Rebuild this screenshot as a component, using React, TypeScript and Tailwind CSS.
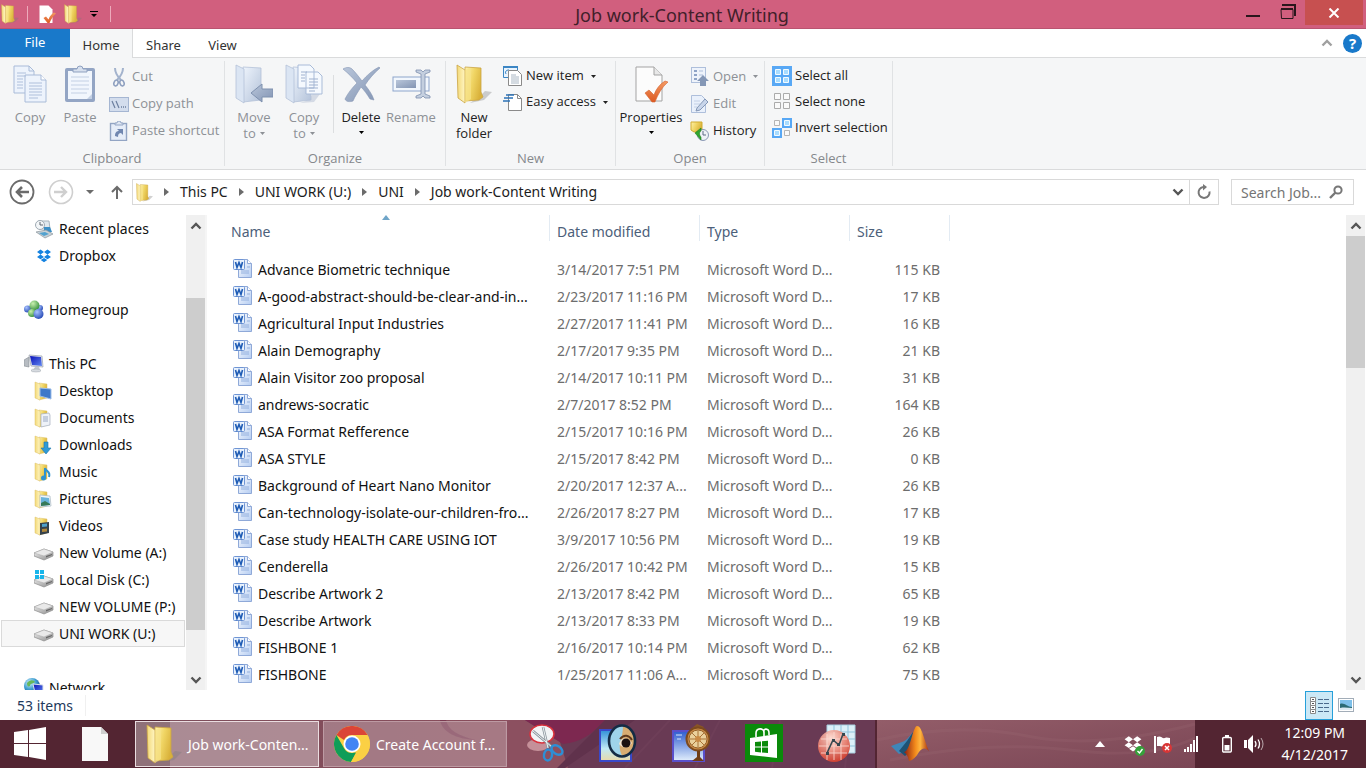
import type { ReactNode } from 'react'
import clsx from 'clsx'

interface IconProps {
  className?: string
}

// Gradients shared by every icon on the page
function SharedDefs() {
  return (
    <svg className="absolute h-0 w-0" aria-hidden="true">
      <defs>
        <linearGradient id="gold" x1="0" y1="0" x2="1" y2="0.4">
          <stop offset="0" stopColor="#fff3ae" />
          <stop offset="0.5" stopColor="#f0d564" />
          <stop offset="1" stopColor="#d9b13a" />
        </linearGradient>
        <linearGradient id="goldLight" x1="0" y1="0" x2="1" y2="0">
          <stop offset="0" stopColor="#f3d978" />
          <stop offset="1" stopColor="#fff6c4" />
        </linearGradient>
        <linearGradient id="steel" x1="0" y1="0" x2="1" y2="1">
          <stop offset="0" stopColor="#eef4fc" />
          <stop offset="1" stopColor="#b4c3da" />
        </linearGradient>
        <linearGradient id="steelDark" x1="0" y1="0" x2="1" y2="1">
          <stop offset="0" stopColor="#b9c6da" />
          <stop offset="1" stopColor="#8294b3" />
        </linearGradient>
        <linearGradient id="tick" x1="0" y1="0" x2="0" y2="1">
          <stop offset="0" stopColor="#f39a63" />
          <stop offset="1" stopColor="#dd5a22" />
        </linearGradient>
        <linearGradient id="wordPage" x1="0" y1="0" x2="1" y2="1">
          <stop offset="0" stopColor="#ffffff" />
          <stop offset="1" stopColor="#b5cdf2" />
        </linearGradient>
        <linearGradient id="screen" x1="0" y1="0" x2="1" y2="1">
          <stop offset="0" stopColor="#0b11b8" />
          <stop offset="1" stopColor="#5f86f0" />
        </linearGradient>
        <linearGradient id="drive" x1="0" y1="0" x2="1" y2="1">
          <stop offset="0" stopColor="#f2f2f2" />
          <stop offset="1" stopColor="#8d8d8d" />
        </linearGradient>
        <radialGradient id="globe" cx="0.35" cy="0.3" r="0.8">
          <stop offset="0" stopColor="#d3f1ff" />
          <stop offset="0.5" stopColor="#3f9fd0" />
          <stop offset="1" stopColor="#12407f" />
        </radialGradient>
        <radialGradient id="greenBall" cx="0.35" cy="0.3" r="0.8">
          <stop offset="0" stopColor="#c9f0b0" />
          <stop offset="1" stopColor="#2c8a34" />
        </radialGradient>
        <radialGradient id="blueBall" cx="0.35" cy="0.3" r="0.8">
          <stop offset="0" stopColor="#a9c4ff" />
          <stop offset="1" stopColor="#1b3fb0" />
        </radialGradient>
        <radialGradient id="redBall" cx="0.4" cy="0.25" r="0.8">
          <stop offset="0" stopColor="#ffd8cc" />
          <stop offset="1" stopColor="#d93a26" />
        </radialGradient>
        <linearGradient id="beach" x1="0" y1="0" x2="0" y2="1">
          <stop offset="0" stopColor="#2f8fd8" />
          <stop offset="0.6" stopColor="#bfe9f5" />
          <stop offset="1" stopColor="#e9d9a8" />
        </linearGradient>
        <linearGradient id="sky" x1="0" y1="0" x2="0" y2="1">
          <stop offset="0" stopColor="#2c5cd0" />
          <stop offset="1" stopColor="#e3effc" />
        </linearGradient>
        <linearGradient id="membrane" x1="0" y1="0" x2="1" y2="0">
          <stop offset="0" stopColor="#8c1d10" />
          <stop offset="0.45" stopColor="#f28a1c" />
          <stop offset="0.65" stopColor="#ffb63f" />
          <stop offset="1" stopColor="#a62b0d" />
        </linearGradient>
        <linearGradient id="clothLeft" x1="0" y1="0" x2="1" y2="0">
          <stop offset="0" stopColor="#7d4e5b" />
          <stop offset="1" stopColor="#8b4c5b" />
        </linearGradient>
        <linearGradient id="clothRight" x1="0" y1="0" x2="1" y2="1">
          <stop offset="0" stopColor="#935d69" />
          <stop offset="1" stopColor="#7b4655" />
        </linearGradient>
      </defs>
    </svg>
  )
}

function FolderIcon({ className }: IconProps) {
  return (
    <svg viewBox="0 0 36 40" className={className} aria-hidden="true">
      <path d="M24 32l5-5 7 1-8 8-14 3z" fill="#7a7a7a" opacity="0.35" />
      <path d="M9 3l16 1v24l2 5-4 3-14 1z" fill="url(#gold)" stroke="#caa545" strokeWidth="0.8" />
      <path d="M1 1l8 5v33l-7-5z" fill="url(#goldLight)" stroke="#caa545" strokeWidth="0.8" />
      <path d="M9 6l6-2v31l-6 4z" fill="#f7e28a" opacity="0.7" />
    </svg>
  )
}

function PageTickIcon({ className }: IconProps) {
  return (
    <svg viewBox="0 0 36 38" className={className} aria-hidden="true">
      <path d="M3 2h18l8 8v26H3z" fill="#fcfcfc" stroke="#a3a3a3" />
      <path d="M21 2v8h8" fill="#e8e8e8" stroke="#a3a3a3" />
      <path d="M12 28l4-3 5 5c2-6 6-11 11-14l3 1c-6 5-10 12-13 20h-3z" fill="url(#tick)" stroke="#d4622f" strokeWidth="0.6" />
    </svg>
  )
}

function CopyIcon() {
  return (
    <svg viewBox="0 0 36 38" className="h-[38px] w-9" aria-hidden="true">
      <g fill="#edf3fc" stroke="#a9bbd8">
        <path d="M2 1h15l5 5v22H2z" />
        <path d="M17 1v5h5" fill="none" />
        <path d="M13 10h16l5 5v22H13z" />
        <path d="M29 10v5h5" fill="#fff" />
      </g>
      <path d="M5 8h9M5 11h9M5 14h6M5 17h6M5 20h6M5 23h6M17 18h13M17 21h13M17 24h13M17 27h13M17 30h13M17 33h9" stroke="#aebfdb" />
    </svg>
  )
}

function PasteIcon() {
  return (
    <svg viewBox="0 0 36 38" className="h-[38px] w-9" aria-hidden="true">
      <rect x="3" y="3" width="30" height="34" rx="2" fill="#93a5c4" />
      <path d="M6 6h24v28H6z" fill="#f1f6fd" />
      <path d="M30 29l-5 5h5z" fill="#c3d0e4" />
      <path d="M9 12h18M9 16h18M9 20h18M9 24h18M9 28h16" stroke="#c3d0e4" />
      <path d="M11 7V4h4a3 3 0 016 0h4v3z" fill="#d7e0ee" stroke="#8fa1c0" />
    </svg>
  )
}

function CutIcon() {
  return (
    <svg viewBox="0 0 20 20" className="size-5" aria-hidden="true">
      <path d="M6 1c0 4 2 8 6 12M14 1c0 4-2 8-6 12" fill="none" stroke="#a3b3cd" strokeWidth="2" />
      <ellipse cx="7" cy="16" rx="2" ry="3" transform="rotate(20 7 16)" fill="none" stroke="#8d9fbf" strokeWidth="1.6" />
      <ellipse cx="13" cy="16" rx="2" ry="3" transform="rotate(-20 13 16)" fill="none" stroke="#8d9fbf" strokeWidth="1.6" />
    </svg>
  )
}

function CopyPathIcon() {
  return (
    <svg viewBox="0 0 20 20" className="size-5" aria-hidden="true">
      <rect x="0.5" y="3.5" width="19" height="14" fill="#d3dded" stroke="#a5b6d2" />
      <path d="M3 7l3 7M7 7l3 7" stroke="#6c7f9f" strokeWidth="1.2" />
      <path d="M12 13h1M14 13h1M16 13h1" stroke="#6c7f9f" strokeWidth="1.4" />
    </svg>
  )
}

function PasteShortcutIcon() {
  return (
    <svg viewBox="0 0 20 20" className="size-5" aria-hidden="true">
      <rect x="1.5" y="2.5" width="16" height="17" fill="#e6edf8" stroke="#93a5c4" strokeWidth="1.4" />
      <path d="M6 4V2h2a2 2 0 014 0h2v2z" fill="#dfe7f3" stroke="#93a5c4" />
      <path d="M6 15c0-4 2-5 4-5L8 8h6v6l-2-2c-2 0-3 1-3 4z" fill="#7187b0" />
    </svg>
  )
}

function MoveToIcon() {
  return (
    <svg viewBox="0 0 38 40" className="h-10 w-[38px]" aria-hidden="true">
      <path d="M8 3l18 1v32L8 38z" fill="url(#steel)" stroke="#b4c2d8" strokeWidth="0.8" />
      <path d="M1 1l8 4v34l-8-5z" fill="#dbe5f3" stroke="#b4c2d8" strokeWidth="0.8" />
      <path d="M16 29l11-9v5h11v8H27v5z" fill="url(#steelDark)" stroke="#7f91ae" />
    </svg>
  )
}

function CopyToIcon() {
  return (
    <svg viewBox="0 0 38 40" className="h-10 w-[38px]" aria-hidden="true">
      <path d="M24 36l4-7 7 1-6 8-14 1z" fill="#c6cfdd" opacity="0.7" />
      <path d="M8 3l18 1v32L8 38z" fill="url(#steel)" stroke="#b4c2d8" strokeWidth="0.8" />
      <path d="M13 1h12l4 4v19H13zM21 8h12l4 4v18H21z" fill="#f5f9fe" stroke="#a9bbd8" />
      <path d="M16 8h6M16 11h4M16 14h4M16 17h4M24 15h9M24 18h9M24 21h9M24 24h9M24 27h6" stroke="#9fb1cf" />
      <path d="M1 1l8 4v34l-8-5z" fill="#dbe5f3" stroke="#b4c2d8" strokeWidth="0.8" />
    </svg>
  )
}

function DeleteIcon() {
  return (
    <svg viewBox="0 0 38 38" className="size-[38px]" aria-hidden="true">
      <path d="M1 4c3-2 7-2 9 0 4 4 7 8 10 12C25 10 31 5 37 2l1 1c-6 5-11 11-15 17 4 5 7 9 9 15l-4-1c-3-5-6-9-9-12-3 5-6 9-8 14-3 1-7 1-8-2 3-6 7-11 12-16C11 13 6 8 1 4z" fill="url(#steelDark)" stroke="#8496b3" strokeWidth="0.6" />
    </svg>
  )
}

function RenameIcon() {
  return (
    <svg viewBox="0 0 40 38" className="h-[38px] w-10" aria-hidden="true">
      <rect x="2" y="12" width="36" height="14" fill="#f2f7fd" stroke="#8ea5cc" />
      <rect x="5" y="15" width="20" height="8" fill="url(#steelDark)" />
      <path d="M25 5h5l2 2 2-2h5v2l-5 2v20l5 2v2h-5l-2-2-2 2h-5v-2l5-2V9l-5-2z" fill="#c4cfdf" stroke="#7f91ae" strokeWidth="0.8" />
    </svg>
  )
}

function NewItemIcon() {
  return (
    <svg viewBox="0 0 20 20" className="size-5" aria-hidden="true">
      <path d="M0.5 0.5h14v11h-14z" fill="#eaf4fd" stroke="#3c86c4" />
      <path d="M0 1h15" stroke="#3c86c4" strokeWidth="2" />
      <path d="M3 8a2.5 2.5 0 014-3" fill="none" stroke="#3c86c4" />
      <path d="M5.5 4.5h9l4 4v11h-13z" fill="#fff" stroke="#8a8a8a" />
      <path d="M8 9h5M8 11h8M8 13h8M8 15h8M8 17h8" stroke="#aab7c4" />
    </svg>
  )
}

function EasyAccessIcon() {
  return (
    <svg viewBox="0 0 20 20" className="size-5" aria-hidden="true">
      <path d="M5.5 2.5h9l4 4v12h-13z" fill="#fff" stroke="#8a8a8a" />
      <path d="M14.5 2.5v4h4" fill="none" stroke="#8a8a8a" />
      <path d="M3 3h8M1 6h9M0 9h7" stroke="#2c73b8" strokeWidth="1.4" />
    </svg>
  )
}

function OpenIcon() {
  return (
    <svg viewBox="0 0 20 20" className="size-5" aria-hidden="true">
      <rect x="1.5" y="0.5" width="14" height="15" fill="#eef3fb" stroke="#aebfdb" />
      <path d="M4 3h3v2H4zM4 7h3v2H4zM4 11h3v2H4z" fill="#8ea3c7" />
      <path d="M9 4h4M9 8h4" stroke="#aebfdb" />
      <path d="M13 8l6 6h-3v5h-6v-5H7z" fill="#8497b6" />
    </svg>
  )
}

function EditIcon() {
  return (
    <svg viewBox="0 0 20 20" className="size-5" aria-hidden="true">
      <path d="M1.500 1.500h10l4 4v13h-14z" fill="#e9f0fb" stroke="#aebfdb" />
      <path d="M4 7h6M4 10h6M4 13h3" stroke="#c3d0e6" />
      <path d="M7 14l8-9 3 3-8 8-4 1z" fill="#c8d5ea" stroke="#8497b6" />
    </svg>
  )
}

function HistoryIcon() {
  return (
    <svg viewBox="0 0 20 20" className="size-5" aria-hidden="true">
      <path d="M1 1h11v10H4l-3-2z" fill="url(#gold)" stroke="#d1ac2f" />
      <circle cx="13" cy="14" r="5.5" fill="#eef1f6" stroke="#8998b3" />
      <path d="M13 10v4h3" fill="none" stroke="#5c6b86" />
      <path d="M5 12l6-5v3c-2 1-2 4 0 6v3z" fill="#31a62f" stroke="#1d7d1f" strokeWidth="0.6" />
    </svg>
  )
}

function SelectAllIcon() {
  return (
    <svg viewBox="0 0 20 20" className="size-5" aria-hidden="true">
      <path d="M0 0h20v20H0z" fill="#58a8f5" />
      <path d="M3.500 3.500h5v5h-5zM11.500 3.500h5v5h-5zM3.500 11.500h5v5h-5zM11.500 11.500h5v5h-5z" fill="#a8dcff" stroke="#f2fbff" />
    </svg>
  )
}

function SelectNoneIcon() {
  return (
    <svg viewBox="0 0 20 20" className="size-5" aria-hidden="true">
      <path d="M2.500 1.500h6v6h-6zM11.500 1.500h6v6h-6zM2.500 10.500h6v6h-6zM11.500 10.500h6v6h-6z" fill="#fafafa" stroke="#ababab" />
    </svg>
  )
}

function InvertIcon() {
  return (
    <svg viewBox="0 0 20 20" className="size-5" aria-hidden="true">
      <path d="M10 0h10v10H10zM0 10h10v10H0z" fill="#58a8f5" />
      <path d="M12.500 2.500h5v5h-5zM2.500 12.500h5v5h-5z" fill="#a8dcff" stroke="#f2fbff" />
      <path d="M2.500 2.500h5v5h-5zM12.500 12.500h5v5h-5z" fill="#fafafa" stroke="#b5b5b5" />
    </svg>
  )
}

function WordIcon() {
  return (
    <svg viewBox="0 0 20 20" className="mb-[3px] size-5 shrink-0" aria-hidden="true">
      <path d="M5.500 1.500h9l4 4v14h-13z" fill="url(#wordPage)" stroke="#8fa9d8" />
      <path d="M14.500 1.500v4h4" fill="#fff" stroke="#8fa9d8" />
      <path d="M14 9h3M8 13h8M8 15h8" stroke="#93b0de" />
      <rect x="0.5" y="1.5" width="11" height="10" rx="1" fill="#e9f2fd" stroke="#6f95d4" />
      <path d="M2.500 4l1.500 5.500 2-5 2 5L9.500 4" fill="none" stroke="#1f5cb5" strokeWidth="1.6" />
    </svg>
  )
}

function DropboxIcon({ className }: IconProps) {
  return (
    <svg viewBox="0 0 20 20" className={className} fill="currentColor" aria-hidden="true">
      <path d="M6.500 3.500L10 6 6.500 8.500 3 6zM13.500 3.500L17 6l-3.500 2.500L10 6zM6.500 8.500L10 11l-3.500 2.300L3 11zM13.500 8.500L17 11l-3.500 2.300L10 11zM6.700 14L10 11.900l3.300 2.100L10 16.200z" />
    </svg>
  )
}

function RecentIcon() {
  return (
    <svg viewBox="0 0 20 20" className="size-5" aria-hidden="true">
      <path d="M4 2h11l1 8H5z" fill="#dfe8ee" stroke="#a7b4bd" />
      <circle cx="6" cy="6" r="4.5" fill="#f3f6f8" stroke="#9faab3" />
      <path d="M6 3v3h3" fill="none" stroke="#5c6770" />
      <path d="M10 8h6l2 5-8 1z" fill="#3b8fc6" />
      <path d="M2 13l10-2 7 4-8 4z" fill="#c9d1d6" stroke="#8b969d" strokeWidth="0.7" />
      <path d="M5 14l6-1 4 2-5 2z" fill="#53a2cf" />
    </svg>
  )
}

function HomegroupIcon() {
  return (
    <svg viewBox="0 0 20 20" className="size-5" aria-hidden="true">
      <circle cx="3.5" cy="9" r="3.5" fill="url(#blueBall)" />
      <circle cx="16" cy="8" r="3" fill="url(#blueBall)" />
      <circle cx="10.5" cy="5.5" r="5" fill="url(#greenBall)" />
      <circle cx="8" cy="13" r="4" fill="url(#greenBall)" />
      <circle cx="14.5" cy="14" r="5" fill="url(#blueBall)" />
    </svg>
  )
}

function ComputerIcon() {
  return (
    <svg viewBox="0 0 20 20" className="size-5" aria-hidden="true">
      <path d="M0 6l5-3v10l-5-1z" fill="#b7bcc2" stroke="#878d94" strokeWidth="0.6" />
      <path d="M5 1l13 1 1 11-12-1z" fill="#e6e9ee" stroke="#9aa1aa" strokeWidth="0.7" />
      <path d="M6 2l11 1 1 9-10-1z" fill="url(#screen)" />
      <path d="M11 13h4l1 3H9z" fill="#c3c8cf" />
      <ellipse cx="12" cy="16.5" rx="5" ry="1.5" fill="#d7dbe0" stroke="#a0a6ae" strokeWidth="0.5" />
    </svg>
  )
}

function NetworkIcon() {
  return (
    <svg viewBox="0 0 20 20" className="size-5" aria-hidden="true">
      <circle cx="8" cy="8" r="8" fill="url(#globe)" />
      <path d="M3 5c3-4 7-3 8-1-2 2-5 1-5 4-2 1-3 0-3-3z" fill="#69b85a" />
      <path d="M9 6l10 1v9l-8-1z" fill="url(#screen)" stroke="#dfe4ea" />
      <path d="M12 17h5l1 2h-7z" fill="#c3c8cf" />
    </svg>
  )
}

function DriveIcon({ windows = false }: { windows?: boolean }) {
  return (
    <svg viewBox="0 0 20 20" className="size-5" aria-hidden="true">
      <path d="M0 10l10-4 9 3v4l-9 4-10-4z" fill="url(#drive)" stroke="#8c8c8c" strokeWidth="0.7" />
      <path d="M0 10l10-4 9 3-9 4z" fill="#e9e9e9" stroke="#a8a8a8" strokeWidth="0.5" />
      <path d="M12 13l6-2v1l-6 2.500z" fill="#666" />
      {windows && <path d="M1 0h4v4H1zM6 0h4v4H6zM1 5h4v4H1zM6 5h4v4H6z" fill="#19b5ea" />}
    </svg>
  )
}

// Small folder with a badge for the library it stands for
function LibraryIcon({ children }: { children: ReactNode }) {
  return (
    <svg viewBox="0 0 20 20" className="size-5" aria-hidden="true">
      <path d="M5 2l8 1v14l-8 2z" fill="url(#gold)" stroke="#dcc06a" strokeWidth="0.5" />
      <path d="M1 1l5 2v16l-5-2z" fill="url(#goldLight)" stroke="#dcc06a" strokeWidth="0.5" />
      {children}
    </svg>
  )
}

function Caret({ className }: IconProps) {
  return (
    <svg viewBox="0 0 5 3" className={clsx('h-[3px] w-[5px]', className)} fill="currentColor" aria-hidden="true">
      <path d="M0 0h5L2.500 3z" />
    </svg>
  )
}

function Chevron({ className }: IconProps) {
  return (
    <svg viewBox="0 0 12 8" className={clsx('h-2 w-3', className)} fill="none" stroke="currentColor" strokeWidth="2.4" aria-hidden="true">
      <path d="M1.500 6.500L6 2l4.500 4.500" />
    </svg>
  )
}

interface BigButtonProps {
  icon: ReactNode
  lines: string[]
  caret?: boolean
  disabled?: boolean
  wide?: boolean
}

function BigButton({ icon, lines, caret, disabled, wide }: BigButtonProps) {
  const last = lines.length - 1
  return (
    <button
      type="button"
      disabled={disabled}
      className={clsx('flex shrink-0 flex-col items-center', wide ? 'w-[70px]' : 'w-[50px]', disabled ? 'text-[#8d9196]' : 'text-[#222]')}
    >
      <span className="flex h-[46px] items-center pb-1">{icon}</span>
      {lines.map((line, i) => (
        <span key={line} className="flex items-center gap-1 leading-4 whitespace-nowrap">
          {line}
          {caret && i === last && last > 0 && <Caret />}
        </span>
      ))}
      {caret && last === 0 && <Caret className="mt-[6px] text-black" />}
    </button>
  )
}

interface SmallButtonProps {
  icon: ReactNode
  label: string
  caret?: boolean
  disabled?: boolean
  tall?: boolean
}

function SmallButton({ icon, label, caret, disabled, tall }: SmallButtonProps) {
  return (
    <button
      type="button"
      disabled={disabled}
      className={clsx('flex items-center gap-[3px] whitespace-nowrap', tall ? 'h-[27px]' : 'h-[26px]', disabled ? 'text-[#8d9196]' : 'text-[#222]')}
    >
      {icon}
      {label}
      {caret && <Caret className="ml-1" />}
    </button>
  )
}

function RibbonGroup({ title, className, children }: { title: string; className: string; children: ReactNode }) {
  return (
    <section aria-label={title} className={clsx('my-[3px] flex flex-col border-r border-[#e0e2e4]', className)}>
      <div className="flex flex-1 pt-[2px]">{children}</div>
      <h2 className="text-center leading-4 text-[#85888c]">{title}</h2>
    </section>
  )
}

function TitleBar() {
  return (
    <header className="flex h-[29px] items-start border-b border-[#b95470] bg-[#d15f7e]">
      <div className="flex h-7 flex-1 items-center pl-px">
        <FolderIcon className="h-5 w-[18px]" />
        <span className="ml-2 h-4 border-l border-[#edaabb]" />
        <button type="button" aria-label="Properties" className="ml-[10px]">
          <svg viewBox="0 0 36 38" className="h-[19px] w-[18px]" aria-hidden="true">
            <path d="M3 1h18l8 8v27H3z" fill="#fff" />
            <path d="M11 26l5-3 5 6c2-6 6-11 11-14l4 2c-6 5-10 12-13 19h-4z" fill="url(#tick)" />
          </svg>
        </button>
        <button type="button" aria-label="New folder" className="ml-2">
          <FolderIcon className="h-5 w-[18px]" />
        </button>
        <button type="button" aria-label="Customize toolbar" className="ml-2">
          <svg viewBox="0 0 8 8" className="size-2" aria-hidden="true">
            <path d="M0 1h8v1H0zM1 4h6L4 7z" />
          </svg>
        </button>
        <span className="ml-3 h-4 border-l border-[#edaabb]" />
      </div>
      <h1 className="pt-[3px] text-[18px] leading-6 text-[#41202a]">Job work-Content Writing</h1>
      <div className="flex flex-1 justify-end pr-[3px]">
        <button type="button" aria-label="Minimize" className="flex h-6 w-9 items-center justify-center">
          <span className="mt-2 h-[2px] w-[14px] bg-[#2a161c]" />
        </button>
        <button type="button" aria-label="Restore" className="flex h-6 w-[34px] items-center justify-center">
          <svg viewBox="0 0 16 16" className="size-4" fill="none" stroke="#2a161c" aria-hidden="true">
            <path d="M2 1h13v11" strokeWidth="2" />
            <path d="M1 5.500h12v9H1.500z" />
            <path d="M1 5h12" strokeWidth="2" />
          </svg>
        </button>
        <button type="button" aria-label="Close" className="flex h-[25px] w-[58px] items-center justify-center bg-[#c75050]">
          <svg viewBox="0 0 12 10" className="h-[10px] w-3" stroke="#fff" strokeWidth="2" aria-hidden="true">
            <path d="M1.500 0.500l9 9M10.500 0.500l-9 9" />
          </svg>
        </button>
      </div>
    </header>
  )
}

function TabBar() {
  return (
    <nav className="flex h-[29px] border-b border-[#dadbdc] text-[13px] text-[#333]">
      <button type="button" className="h-7 w-[70px] bg-[#1979ca] text-white">File</button>
      <button type="button" className="-mb-px h-[29px] w-[63px] border-r border-[#dadbdc] bg-[#f5f6f7] pt-1">Home</button>
      <button type="button" className="h-[29px] w-[61px] pt-1">Share</button>
      <button type="button" className="h-[29px] w-[57px] pt-1">View</button>
      <div className="ml-auto flex items-center gap-[10px] pr-1">
        <button type="button" aria-label="Collapse ribbon" className="text-[#a0a0a0]">
          <Chevron />
        </button>
        <button type="button" aria-label="Help" className="flex size-[19px] items-center justify-center rounded-full bg-[#1979ca] text-[15px] leading-none font-bold text-white">
          ?
        </button>
      </div>
    </nav>
  )
}

function Ribbon() {
  return (
    <div className="flex h-[112px] border-b border-[#dadbdc] bg-[#f5f6f7] font-['Open_Sans','Noto_Sans',sans-serif] text-[13px]">
      <RibbonGroup title="Clipboard" className="w-[225px]">
        <div className="ml-[5px] flex">
          <BigButton icon={<CopyIcon />} lines={['Copy']} disabled />
          <BigButton icon={<PasteIcon />} lines={['Paste']} disabled />
        </div>
        <div className="ml-1">
          <SmallButton icon={<CutIcon />} label="Cut" disabled tall />
          <SmallButton icon={<CopyPathIcon />} label="Copy path" disabled tall />
          <SmallButton icon={<PasteShortcutIcon />} label="Paste shortcut" disabled tall />
        </div>
      </RibbonGroup>
      <RibbonGroup title="Organize" className="w-[221px]">
        <div className="ml-1 flex">
          <BigButton icon={<MoveToIcon />} lines={['Move', 'to']} caret disabled />
          <BigButton icon={<CopyToIcon />} lines={['Copy', 'to']} caret disabled />
        </div>
        <span className="mr-[2px] ml-1 mt-3 h-[58px] border-l border-[#dcdee0]" />
        <BigButton icon={<DeleteIcon />} lines={['Delete']} caret />
        <BigButton icon={<RenameIcon />} lines={['Rename']} disabled />
      </RibbonGroup>
      <RibbonGroup title="New" className="w-[170px]">
        <div className="ml-[3px] flex">
          <BigButton icon={<FolderIcon className="h-10 w-9" />} lines={['New', 'folder']} />
        </div>
        <div className="ml-1">
          <SmallButton icon={<NewItemIcon />} label="New item" caret />
          <SmallButton icon={<EasyAccessIcon />} label="Easy access" caret />
        </div>
      </RibbonGroup>
      <RibbonGroup title="Open" className="w-[149px]">
        <BigButton icon={<PageTickIcon className="h-[38px] w-9" />} lines={['Properties']} caret wide />
        <div className="ml-1">
          <SmallButton icon={<OpenIcon />} label="Open" caret disabled tall />
          <SmallButton icon={<EditIcon />} label="Edit" disabled tall />
          <SmallButton icon={<HistoryIcon />} label="History" tall />
        </div>
      </RibbonGroup>
      <RibbonGroup title="Select" className="w-[128px]">
        <div className="ml-[7px]">
          <SmallButton icon={<SelectAllIcon />} label="Select all" />
          <SmallButton icon={<SelectNoneIcon />} label="Select none" />
          <SmallButton icon={<InvertIcon />} label="Invert selection" />
        </div>
      </RibbonGroup>
    </div>
  )
}

const crumbs = ['This PC', 'UNI WORK (U:)', 'UNI', 'Job work-Content Writing']

function AddressBar() {
  return (
    <div className="flex h-11 items-center pr-3 pl-[9px] text-[14px] text-[#1c1c1c]">
      <button type="button" aria-label="Back" className="text-[#6b6b6b]">
        <svg viewBox="0 0 26 26" className="size-[26px]" fill="none" stroke="currentColor" aria-hidden="true">
          <circle cx="13" cy="13" r="11.5" strokeWidth="1.8" />
          <path d="M20 13H8M13 8l-5 5 5 5" strokeWidth="2.6" />
        </svg>
      </button>
      <button type="button" aria-label="Forward" disabled className="ml-[13px] text-[#cfcfcf]">
        <svg viewBox="0 0 26 26" className="size-[26px]" fill="none" stroke="currentColor" aria-hidden="true">
          <circle cx="13" cy="13" r="11.5" strokeWidth="1.6" />
          <path d="M6 13h12M13 8l5 5-5 5" strokeWidth="2.4" />
        </svg>
      </button>
      <button type="button" aria-label="Recent locations" className="ml-3 text-[#6b6b6b]">
        <svg viewBox="0 0 8 4" className="h-1 w-2" fill="currentColor" aria-hidden="true">
          <path d="M0 0h8L4 4z" />
        </svg>
      </button>
      <button type="button" aria-label="Up" className="ml-4 text-[#6b6b6b]">
        <svg viewBox="0 0 14 14" className="size-[14px]" fill="none" stroke="currentColor" strokeWidth="2" aria-hidden="true">
          <path d="M7 14V2M2 7l5-5 5 5" />
        </svg>
      </button>
      <div className="ml-2 flex h-[26px] flex-1 items-center border border-[#d9d9d9] pl-[3px]">
        <FolderIcon className="h-[19px] w-[17px]" />
        {crumbs.map((crumb) => (
          <span key={crumb} className="flex items-center">
            <svg viewBox="0 0 5 8" className="mx-[11px] h-2 w-[5px]" fill="#6b6b6b" aria-hidden="true">
              <path d="M0 0l5 4-5 4z" />
            </svg>
            <button type="button" className="pb-[2px]">{crumb}</button>
          </span>
        ))}
        <button type="button" aria-label="Previous locations" className="mr-[5px] ml-auto text-[#555]">
          <Chevron className="rotate-180" />
        </button>
        <button type="button" aria-label="Refresh" className="flex h-full w-[29px] items-center justify-center border-l border-[#d9d9d9]">
          <svg viewBox="0 0 16 16" className="size-4" fill="none" stroke="#777" strokeWidth="2" aria-hidden="true">
            <path d="M7 3a5.500 5.500 0 106.500 4.500" />
            <path d="M7 0l4 3-4 3.500z" fill="#777" stroke="none" />
          </svg>
        </button>
      </div>
      <label className="ml-3 flex h-[26px] w-[123px] items-center border border-[#d9d9d9] pl-[9px]">
        <input type="text" aria-label="Search Job work-Content Writing" placeholder="Search Job..." className="w-[88px] bg-transparent outline-none placeholder:text-[#757575]" />
        <svg viewBox="0 0 14 14" className="size-[14px] shrink-0" fill="none" stroke="#777" aria-hidden="true">
          <circle cx="9" cy="5" r="3.6" strokeWidth="2" />
          <path d="M6.500 7.500L1 13" strokeWidth="2.4" />
        </svg>
      </label>
    </div>
  )
}

interface Place {
  name: string
  icon: ReactNode
  root?: boolean
  gap?: boolean
  selected?: boolean
}

const places: Place[] = [
  { name: 'Recent places', icon: <RecentIcon /> },
  { name: 'Dropbox', icon: <DropboxIcon className="size-5 text-[#1583e0]" /> },
  { name: 'Homegroup', icon: <HomegroupIcon />, root: true, gap: true },
  { name: 'This PC', icon: <ComputerIcon />, root: true, gap: true },
  { name: 'Desktop', icon: <LibraryIcon><path d="M6 7l11 1v10L6 15z" fill="#3d78c9" stroke="#9dbde8" /></LibraryIcon> },
  {
    name: 'Documents',
    icon: (
      <LibraryIcon>
        <path d="M7 6l8-1 1 2v10l-9 2z" fill="#eef2f8" stroke="#a3aebd" strokeWidth="0.7" />
        <path d="M9 9h5M9 11h5M9 13h5" stroke="#9aa9c4" />
      </LibraryIcon>
    ),
  },
  { name: 'Downloads', icon: <LibraryIcon><path d="M10 7h4v6h3l-5 6-5-6h3z" fill="#2f9ad6" stroke="#1c76ad" strokeWidth="0.6" /></LibraryIcon> },
  {
    name: 'Music',
    icon: (
      <LibraryIcon>
        <path d="M11 6c1 4 6 3 4 9" fill="none" stroke="#2d93cf" strokeWidth="2" />
        <path d="M11 6v10" stroke="#2d93cf" strokeWidth="2" />
        <circle cx="9.5" cy="16" r="2.5" fill="#2d93cf" />
      </LibraryIcon>
    ),
  },
  {
    name: 'Pictures',
    icon: (
      <LibraryIcon>
        <path d="M6 6l10 1 1 10-11 1z" fill="#f1f6fa" stroke="#a9b7c2" strokeWidth="0.7" />
        <path d="M7 8l8 1 1 7-9 1z" fill="#69b4dc" />
        <path d="M7 14l4-2 5 3v1l-9 1z" fill="#377a58" />
      </LibraryIcon>
    ),
  },
  {
    name: 'Videos',
    icon: (
      <LibraryIcon>
        <path d="M6 7l9-1v11l-9 2z" fill="#36424c" />
        <path d="M8 8l5-.5v3L8 11z" fill="#4fa1cb" />
        <path d="M8 13l5-.5v3L8 16z" fill="#b0873b" />
      </LibraryIcon>
    ),
  },
  { name: 'New Volume (A:)', icon: <DriveIcon /> },
  { name: 'Local Disk (C:)', icon: <DriveIcon windows /> },
  { name: 'NEW VOLUME (P:)', icon: <DriveIcon /> },
  { name: 'UNI WORK (U:)', icon: <DriveIcon />, selected: true },
  { name: 'Network', icon: <NetworkIcon />, root: true, gap: true },
]

function ScrollBar({ thumb }: { thumb: ReactNode }) {
  return (
    <div className="flex w-[19px] shrink-0 flex-col bg-[#f0f0f0] text-[#555]">
      <button type="button" aria-label="Scroll up" className="flex h-[21px] shrink-0 items-center justify-center">
        <Chevron />
      </button>
      <div className="min-h-0 flex-1">{thumb}</div>
      <button type="button" aria-label="Scroll down" className="flex h-[21px] shrink-0 items-center justify-center">
        <Chevron className="rotate-180" />
      </button>
    </div>
  )
}

function Sidebar() {
  return (
    <aside className="flex shrink-0 border-r-2 border-[#f5f5f5]">
      <ul className="w-[186px] overflow-hidden pl-px">
        {places.map((place) => (
          <li key={place.name} className={clsx(place.gap && 'mt-[27px]')}>
            <button
              type="button"
              className={clsx(
                'flex h-[27px] w-[184px] items-center gap-[5px] border text-left whitespace-nowrap',
                place.root ? 'pl-[22px]' : 'pl-8',
                place.selected ? 'border-[#dadada] bg-[#f7f7f7]' : 'border-transparent',
              )}
            >
              <span className="shrink-0">{place.icon}</span>
              {place.name}
            </button>
          </li>
        ))}
      </ul>
      <ScrollBar thumb={<div className="mt-[62px] h-[332px] bg-[#cdcdcd]" />} />
    </aside>
  )
}

const files = [
  { name: 'Advance Biometric technique', date: '3/14/2017 7:51 PM', size: '115 KB' },
  { name: 'A-good-abstract-should-be-clear-and-in...', date: '2/23/2017 11:16 PM', size: '17 KB' },
  { name: 'Agricultural Input Industries', date: '2/27/2017 11:41 PM', size: '16 KB' },
  { name: 'Alain Demography', date: '2/17/2017 9:35 PM', size: '21 KB' },
  { name: 'Alain Visitor zoo proposal', date: '2/14/2017 10:11 PM', size: '31 KB' },
  { name: 'andrews-socratic', date: '2/7/2017 8:52 PM', size: '164 KB' },
  { name: 'ASA Format Refference', date: '2/15/2017 10:16 PM', size: '26 KB' },
  { name: 'ASA STYLE', date: '2/15/2017 8:42 PM', size: '0 KB' },
  { name: 'Background of Heart Nano Monitor', date: '2/20/2017 12:37 A...', size: '26 KB' },
  { name: 'Can-technology-isolate-our-children-fro...', date: '2/26/2017 8:27 PM', size: '17 KB' },
  { name: 'Case study HEALTH CARE USING IOT', date: '3/9/2017 10:56 PM', size: '19 KB' },
  { name: 'Cenderella', date: '2/26/2017 10:42 PM', size: '15 KB' },
  { name: 'Describe Artwork 2', date: '2/13/2017 8:42 PM', size: '65 KB' },
  { name: 'Describe Artwork', date: '2/13/2017 8:33 PM', size: '19 KB' },
  { name: 'FISHBONE 1', date: '2/16/2017 10:14 PM', size: '62 KB' },
  { name: 'FISHBONE', date: '1/25/2017 11:06 A...', size: '75 KB' },
]

function FileList() {
  return (
    <main className="min-w-0 flex-1 overflow-hidden">
      <table className="table-fixed border-collapse">
        <colgroup>
          <col className="w-[343px]" />
          <col className="w-[150px]" />
          <col className="w-[150px]" />
          <col className="w-[100px]" />
        </colgroup>
        <thead>
          <tr className="text-left text-[#4c607a]">
            <th className="h-[41px] p-0 align-top font-normal">
              <div className="relative flex h-[26px] items-end border-r border-[#e3ebf3] pl-6 leading-[18px]">
                Name
                <svg viewBox="0 0 8 5" className="absolute top-0 left-[175px] h-[5px] w-2" aria-hidden="true">
                  <path d="M0 5l4-5 4 5z" fill="#6fa5c8" />
                </svg>
              </div>
            </th>
            {['Date modified', 'Type', 'Size'].map((label) => (
              <th key={label} className="p-0 align-top font-normal">
                <div className="flex h-[26px] items-end border-r border-[#e3ebf3] pl-[7px] leading-[18px]">{label}</div>
              </th>
            ))}
          </tr>
        </thead>
        <tbody>
          {files.map((file) => (
            <tr key={file.name} className="h-[27px] whitespace-nowrap text-[#6d6d6d]">
              <td className="p-0 text-[#111]">
                <div className="flex items-center gap-[5px] pl-[26px]">
                  <WordIcon />
                  {file.name}
                </div>
              </td>
              <td className="p-0 pl-[7px]">{file.date}</td>
              <td className="p-0 pl-[7px]">Microsoft Word D...</td>
              <td className="p-0 pr-[10px] text-right">{file.size}</td>
            </tr>
          ))}
        </tbody>
      </table>
    </main>
  )
}

function StatusBar() {
  return (
    <footer className="flex h-[30px] items-center pr-3 pl-[17px] text-[14px] text-[#1e395b]">
      <span className="border-r border-[#f0f0f0] pr-3">53 items</span>
      <button type="button" aria-label="Details view" className="ml-auto flex h-[29px] w-7 items-center justify-center border border-[#26a0da] bg-[#cbe8f6]">
        <svg viewBox="0 0 20 17" className="h-[17px] w-5" aria-hidden="true">
          <path d="M1.500 0.500h5v4h-5zM1.500 4.500h5v4h-5zM1.500 8.500h5v4h-5zM1.500 12.500h5v4h-5z" fill="#fff" stroke="#8a8a8a" />
          <path d="M3 2.500h2M3 6.500h2M3 10.500h2M3 14.500h2" stroke="#555" />
          <path d="M9 2.500h5M15 2.500h5M9 6.500h5M15 6.500h5M9 10.500h5M15 10.500h5M9 14.500h5M15 14.500h5" stroke="#4a6a8c" />
        </svg>
      </button>
      <button type="button" aria-label="Thumbnail view" className="ml-[5px]">
        <svg viewBox="0 0 16 14" className="h-[14px] w-4" aria-hidden="true">
          <rect x="0.5" y="0.5" width="15" height="13" fill="#fff" stroke="#a2adb8" />
          <path d="M2 2h12v10H2z" fill="#7dc0ea" />
          <path d="M2 6c4-2 7 3 12 3v3H2z" fill="#2a6b75" />
          <path d="M2 10c5-1 8 0 12 0v2H2z" fill="#dceaf2" />
        </svg>
      </button>
    </footer>
  )
}

function Wallpaper() {
  return (
    <svg viewBox="0 0 1366 48" preserveAspectRatio="none" className="absolute inset-0 h-full w-full" aria-hidden="true">
      <rect width="1366" height="48" fill="#532532" />
      <rect x="170" width="390" height="48" fill="url(#clothLeft)" />
      <path d="M440 0h6c2 10 12 16 30 20-20-1-34-8-36-20z" fill="#6e2946" opacity="0.6" />
      <path d="M505 0h370v48H505z" fill="#693a54" />
      <path d="M505 0h20l35 22 8 26h-63z" fill="#8c5060" />
      <path d="M525 0h80c-12 14-24 22-42 24z" fill="#7d2850" />
      <path d="M605 0h30l-70 48h-8z" fill="#60324c" />
      <path d="M670 0l-45 48M720 0l-25 48M780 0l-8 48M850 0l-5 48" stroke="#7a4a62" strokeWidth="2" opacity="0.3" />
      <rect x="877" width="318" height="48" fill="url(#clothRight)" />
      <path d="M877 20q80-18 150-4t168-12M890 40q100-20 180-10t125-12" fill="none" stroke="#a26d76" strokeWidth="3" opacity="0.2" />
    </svg>
  )
}

function ChromeIcon() {
  return (
    <svg viewBox="0 0 36 36" className="size-9" aria-hidden="true">
      <circle cx="18" cy="18" r="18" fill="#fbd044" />
      <path d="M2.400 9A18 18 0 0133.600 9H18a9 9 0 00-8 5z" fill="#db4437" />
      <path d="M2.400 9L10.200 22.500A9 9 0 0018 27l4-.6L17 36A18 18 0 012.400 9z" fill="#0f9d58" />
      <path d="M18 10h16a18 18 0 01-17 26l8.500-14z" fill="#fbd044" />
      <circle cx="18" cy="18" r="8.5" fill="#fff" />
      <circle cx="18" cy="18" r="6.8" fill="#4285f4" />
    </svg>
  )
}

const pinned: { name: string; icon: ReactNode }[] = [
  {
    name: 'Snipping Tool',
    icon: (
      <>
        <ellipse cx="12" cy="21" rx="11" ry="6" fill="#d3a0a8" opacity="0.8" />
        <ellipse cx="16" cy="10" rx="12" ry="9" fill="#f2f4f6" stroke="#d9323d" strokeWidth="1.5" />
        <path d="M7 7l19 16M17 3l5 21" stroke="#8d979e" strokeWidth="2.6" />
        <path d="M7 7l19 16M17 3l5 21" stroke="#eef1f3" strokeWidth="1" />
        <ellipse cx="31" cy="26" rx="6" ry="4" transform="rotate(35 31 26)" fill="none" stroke="#2d8fd6" strokeWidth="2.4" />
        <ellipse cx="22" cy="31" rx="4" ry="5.5" transform="rotate(10 22 31)" fill="none" stroke="#2d8fd6" strokeWidth="2.4" />
      </>
    ),
  },
  {
    name: 'Image viewer',
    icon: (
      <>
        <rect x="1" y="6" width="31" height="31" fill="url(#beach)" stroke="#3a49c9" strokeWidth="2" />
        <ellipse cx="23" cy="17" rx="13" ry="16" fill="#9fd4ea" />
        <path d="M24 2c16 4 16 25 0 31-4-6-4-12-2-17 1-5 2-9 2-14z" fill="#d8ad72" />
        <path d="M20 20c2-7 8-8 13-1-3 5-9 6-13 1z" fill="#f3e4cf" />
        <circle cx="27" cy="19" r="4.5" fill="#1c1210" />
        <path d="M21 15c4-5 9-4 12 1" fill="none" stroke="#5e3a1d" strokeWidth="2" />
        <ellipse cx="23" cy="17" rx="13" ry="15.5" fill="none" stroke="#142c45" strokeWidth="2.6" />
      </>
    ),
  },
  {
    name: 'Image manager',
    icon: (
      <>
        <rect x="1" y="7" width="31" height="30" fill="url(#sky)" stroke="#5a50cc" strokeWidth="2" />
        <path d="M4 11h6M5 15h4" stroke="#d8e6fa" />
        <path d="M19 5l6-5 7 3-3 4z" fill="#8a5526" />
        <circle cx="26" cy="15" r="11.5" fill="#c98a45" stroke="#7d4a1e" strokeWidth="2" />
        <circle cx="26" cy="15" r="9" fill="#ead09b" stroke="#94602b" />
        <path d="M26 7v16M18 15h16M20 9l12 12M32 9L20 21" stroke="#a87337" />
        <circle cx="26" cy="15" r="3" fill="#c98a45" />
        <path d="M25 27h3v6l4 4H20l5-4z" fill="#6f3d18" />
      </>
    ),
  },
  {
    name: 'Store',
    icon: (
      <>
        <path d="M0 0h38v38H0z" fill="#0a8a0a" />
        <path d="M5 14l27-4v24L5 31z" fill="#fff" />
        <path d="M11 13V9c0-5 8-6 8 0v3M19 12V8c-1-4 5-4 5 1v2" fill="none" stroke="#fff" strokeWidth="1.6" />
        <path d="M10 18l6-.6v5H10zM17 17.300l6-.6v5.700h-6zM10 23.400h6v5l-6-.6zM17 23.400h6v5.700l-6-.6z" fill="#0a8a0a" />
      </>
    ),
  },
  {
    name: 'Chart tool',
    icon: (
      <>
        <path d="M9 1h28v28H9z" fill="#dceff8" stroke="#a9cfe0" />
        <path d="M16 1v28M23 1v28M30 1v28M9 8h28M9 15h28M9 22h28" stroke="#8fc3db" />
        <circle cx="16" cy="22" r="16" fill="url(#redBall)" opacity="0.9" />
        <path d="M9 10v26M16 8v28M23 10v26M3 15h26M1 22h30M3 29h26" stroke="#ffe0d8" opacity="0.8" />
        <path d="M9 29l6-13 6 5 4-11" fill="none" stroke="#37474f" strokeWidth="1.6" />
        <path d="M8 28h3v3H8zM14 15h3v3h-3zM19 19h3v3h-3zM24 9h3v3h-3z" fill="#37474f" />
      </>
    ),
  },
  {
    name: 'MATLAB',
    icon: (
      <>
        <path d="M0 22l11-4c4-1 7-5 10-9l-5 17-8 4z" fill="#3f86b8" />
        <path d="M8 27l8-10 6-9-2 18-6 6z" fill="#1e5274" />
        <path d="M13 28c6 0 9-26 13-26 5 0 7 14 12 25-4-4-7-3-10 1-3 5-6 8-10 9-1-4-2-7-5-9z" fill="url(#membrane)" />
      </>
    ),
  },
]

function Taskbar() {
  return (
    <div className="relative h-12 text-white">
      <Wallpaper />
      <div className="relative flex h-full items-center">
        <button type="button" aria-label="Start" className="ml-[14px]">
          <svg viewBox="0 0 32 34" className="h-[34px] w-8" fill="#fff" aria-hidden="true">
            <path d="M0 5l14-2v13H0zM15 3l17-3v16H15zM0 17h14v13L0 28zM15 17h17v16l-17-3z" />
          </svg>
        </button>
        <button type="button" aria-label="Document" className="ml-9">
          <svg viewBox="0 0 26 34" className="h-[34px] w-[26px]" aria-hidden="true">
            <path d="M0 0h19l7 7v27H0z" fill="#f8f8f8" />
            <path d="M19 0v7h7z" fill="#cfcfcf" />
          </svg>
        </button>
        <button type="button" className="ml-[27px] flex h-[46px] w-[184px] items-center gap-[6px] border border-[#eadde0] bg-white/35 pl-[10px] text-[14px] whitespace-nowrap">
          <FolderIcon className="h-10 w-9" />
          Job work-Conten...
        </button>
        <button type="button" className="ml-1 flex h-[46px] w-[184px] items-center gap-[6px] border border-[#bd9aa3] bg-white/25 pl-[10px] text-[14px] whitespace-nowrap">
          <ChromeIcon />
          Create Account f...
        </button>
        <div className="ml-px flex">
          {pinned.map((app) => (
            <button key={app.name} type="button" aria-label={app.name} className="flex w-[73px] justify-center">
              <svg viewBox="0 0 38 38" className="mb-[2px] size-[38px]" aria-hidden="true">{app.icon}</svg>
            </button>
          ))}
        </div>
        <div className="ml-auto flex items-center pr-[18px]">
          <button type="button" aria-label="Show hidden icons">
            <svg viewBox="0 0 10 6" className="h-[6px] w-[10px]" fill="#fff" aria-hidden="true">
              <path d="M0 6l5-6 5 6z" />
            </svg>
          </button>
          <span className="relative ml-4">
            <DropboxIcon className="size-6 text-white" />
            <svg viewBox="0 0 10 10" className="absolute right-0 bottom-0 size-[10px]" aria-hidden="true">
              <circle cx="5" cy="5" r="5" fill="#35a13a" />
              <path d="M2.500 5l2 2 3-4" fill="none" stroke="#fff" strokeWidth="1.4" />
            </svg>
          </span>
          <svg viewBox="0 0 18 18" className="ml-[9px] size-[18px]" aria-hidden="true">
            <path d="M1 1v17" stroke="#fff" strokeWidth="2" />
            <path d="M3 2c4-2 5 2 8 1 2-1 3 0 5 0v8c-3 1-4-1-6 0s-4 0-7 0z" fill="#fff" />
            <circle cx="13" cy="13" r="5" fill="#d93636" />
            <path d="M11 11l4 4M15 11l-4 4" stroke="#fff" strokeWidth="1.5" />
          </svg>
          <svg viewBox="0 0 15 16" className="ml-3 h-4 w-[15px]" fill="#fff" aria-hidden="true">
            <path d="M0 13h2v3H0zM3 11h2v5H3zM6 8h2v8H6zM9 4h2v12H9zM12 0h2v16h-2z" />
          </svg>
          <svg viewBox="0 0 10 18" className="ml-[23px] h-[18px] w-[10px]" aria-hidden="true">
            <path d="M3 0h4v2H3z" fill="#fff" />
            <rect x="0.7" y="2.5" width="8.6" height="14.5" rx="1" fill="none" stroke="#fff" strokeWidth="1.4" />
            <path d="M2.500 10h5v5.500h-5z" fill="#fff" />
          </svg>
          <svg viewBox="0 0 20 18" className="ml-3 h-[18px] w-5" fill="none" stroke="#fff" aria-hidden="true">
            <path d="M0 5h3v8H0zM4 5l5-5v18l-5-5z" fill="#fff" stroke="none" />
            <path d="M11 6q2 3 0 6M14 4.500q3 4.500 0 9" strokeWidth="1.3" />
            <path d="M17 3q4 6 0 12" opacity="0.6" />
          </svg>
          <time className="ml-[18px] text-center text-[14px] leading-[22px]">
            12:09 PM
            <br />
            4/12/2017
          </time>
        </div>
      </div>
    </div>
  )
}

export default function App() {
  return (
    <div className="flex h-screen flex-col overflow-hidden bg-white font-['Noto_Sans','Open_Sans',sans-serif]">
      <SharedDefs />
      <TitleBar />
      <TabBar />
      <Ribbon />
      <AddressBar />
      <div className="flex min-h-0 flex-1 pt-px text-[14px] text-[#111]">
        <Sidebar />
        <FileList />
        <ScrollBar thumb={<div className="h-[132px] bg-[#cdcdcd]" />} />
        <span className="w-px" />
      </div>
      <StatusBar />
      <Taskbar />
    </div>
  )
}
